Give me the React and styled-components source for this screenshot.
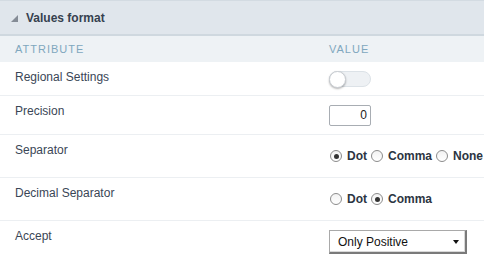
import React from "react";
import styled, { createGlobalStyle } from "styled-components";

const Global = createGlobalStyle`
  body {
    margin: 0;
    background: #fff;
    font-family: "Liberation Sans", Arial, sans-serif;
  }
`;

const Panel = styled.section`
  width: 484px;
`;

const Header = styled.div`
  display: flex;
  align-items: center;
  gap: 8px;
  height: 33px;
  padding-left: 11px;
  background: #e0e6ec;
  border-top: 1px solid #d3dbe2;
  border-bottom: 2px solid #cfd8df;
`;

const Caret = styled.span`
  width: 0;
  height: 0;
  border-left: 7px solid transparent;
  border-bottom: 7px solid #858c96;
  margin-top: 1px;
`;

const Title = styled.h3`
  margin: 0;
  font-size: 12px;
  font-weight: bold;
  color: #36414f;
`;

const Grid = styled.div`
  display: grid;
  grid-template-columns: 329px 1fr;
  min-height: ${(p) => p.h}px;
  border-bottom: ${(p) => (p.last ? "none" : "1px solid #eceff2")};
`;

const ColHead = styled(Grid)`
  background: #eef2f5;
  align-items: center;
  border-bottom: none;
  span {
    font-size: 11px;
    letter-spacing: 1px;
    color: #80a7be;
  }
  span:first-child {
    padding-left: 15px;
  }
`;

const Label = styled.div`
  padding: 7px 0 0 15px;
  font-size: 12px;
  line-height: 16px;
  color: #3a4656;
`;

const Value = styled.div`
  display: flex;
  align-items: center;
`;

const Toggle = styled.span`
  position: relative;
  width: 40px;
  height: 14px;
  border: 1px solid #dce2e7;
  border-radius: 9px;
  background: #eef1f4;
  &::after {
    content: "";
    position: absolute;
    left: -1px;
    top: -1px;
    width: 15px;
    height: 15px;
    border-radius: 50%;
    background: #fff;
    border: 1px solid #c9cdd2;
    box-shadow: 0 1px 2px rgba(0, 0, 0, 0.3);
  }
`;

const NumberBox = styled.div`
  width: 37px;
  height: 19px;
  border: 1px solid #a8adb3;
  border-radius: 2px;
  padding-right: 3px;
  text-align: right;
  font-size: 12px;
  line-height: 19px;
  color: #222;
`;

const Radios = styled.div`
  display: flex;
  align-items: center;
`;

const Circle = styled.span`
  width: 10px;
  height: 10px;
  margin-left: ${(p) => (p.first ? 1 : 4)}px;
  border: 1px solid #8c8c8c;
  border-radius: 50%;
  background: linear-gradient(#f2f2f2, #fff);
  display: flex;
  align-items: center;
  justify-content: center;
  &::after {
    content: "";
    width: 5px;
    height: 5px;
    border-radius: 50%;
    background: ${(p) => (p.on ? "#333" : "transparent")};
  }
`;

const RadioText = styled.span`
  margin-left: 5px;
  font-size: 12px;
  font-weight: bold;
  color: #2c3542;
`;

const Select = styled.div`
  display: flex;
  align-items: center;
  justify-content: space-between;
  width: 121px;
  height: 21px;
  padding: 0 6px 0 8px;
  border: 1px solid #a9a9a9;
  border-right: 2px solid #7a7a7a;
  border-bottom: 2px solid #7a7a7a;
  box-shadow: inset -1px -1px 0 #d8d8d8;
  font-size: 12px;
  color: #111;
`;

const Arrow = styled.span`
  width: 0;
  height: 0;
  border-left: 3px solid transparent;
  border-right: 3px solid transparent;
  border-top: 4px solid #111;
`;

const Radio = ({ label, on, first }) => (
  <>
    <Circle on={on} first={first} />
    <RadioText>{label}</RadioText>
  </>
);

export default function App() {
  return (
    <Panel>
      <Global />
      <Header>
        <Caret />
        <Title>Values format</Title>
      </Header>
      <ColHead h={26}>
        <span>ATTRIBUTE</span>
        <span>VALUE</span>
      </ColHead>
      <Grid h={33}>
        <Label>Regional Settings</Label>
        <Value>
          <Toggle />
        </Value>
      </Grid>
      <Grid h={38}>
        <Label>Precision</Label>
        <Value>
          <NumberBox>0</NumberBox>
        </Value>
      </Grid>
      <Grid h={42}>
        <Label>Separator</Label>
        <Value>
          <Radios>
            <Radio label="Dot" on first />
            <Radio label="Comma" />
            <Radio label="None" />
          </Radios>
        </Value>
      </Grid>
      <Grid h={42}>
        <Label>Decimal Separator</Label>
        <Value>
          <Radios>
            <Radio label="Dot" first />
            <Radio label="Comma" on />
          </Radios>
        </Value>
      </Grid>
      <Grid h={42} last>
        <Label>Accept</Label>
        <Value>
          <Select>
            <span>Only Positive</span>
            <Arrow />
          </Select>
        </Value>
      </Grid>
    </Panel>
  );
}
